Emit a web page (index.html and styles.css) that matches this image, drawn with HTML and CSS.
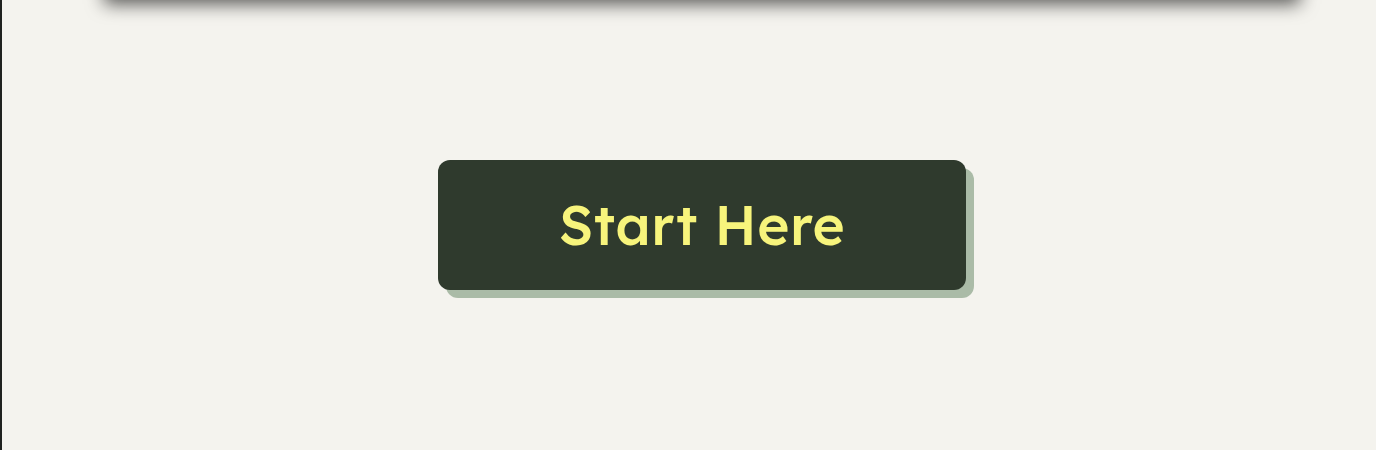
FILE: index.html
```html
<!DOCTYPE html>
<html>
<head>
<meta charset="utf-8">
<link rel="stylesheet" href="styles.css">
</head>
<body>
<div class="page">
  <div class="topbar"></div>
  <main class="hero">
    <a class="cta" href="#">Start Here</a>
  </main>
</div>
</body>
</html>
```
FILE: styles.css
```css
html, body {
  margin: 0;
  padding: 0;
  background: #f4f3ee;
}
.page {
  height: 450px;
  overflow: hidden;
  border-left: 2px solid #1f221f;
  padding-left: 26px;
  display: flex;
  flex-direction: column;
  align-items: center;
  font-family: "Lexend", "Inter", "Noto Sans", sans-serif;
}
.topbar {
  width: 1196px;
  height: 40px;
  margin-top: -42px;
  background: #f4f3ee;
  box-shadow: 0 6px 18px rgba(0, 0, 0, 0.65);
  flex: none;
}
.hero {
  padding-top: 162px;
  display: flex;
  justify-content: center;
}
.cta {
  display: flex;
  align-items: center;
  justify-content: center;
  width: 528px;
  height: 130px;
  box-sizing: border-box;
  background: #2f3a2d;
  color: #f7f47c;
  border-radius: 12px;
  box-shadow: 8px 8px 0 #aabba7;
  font-size: 55px;
  font-weight: 500;
  text-decoration: none;
  letter-spacing: 0.5px;
  padding-bottom: 2px;
}
```
